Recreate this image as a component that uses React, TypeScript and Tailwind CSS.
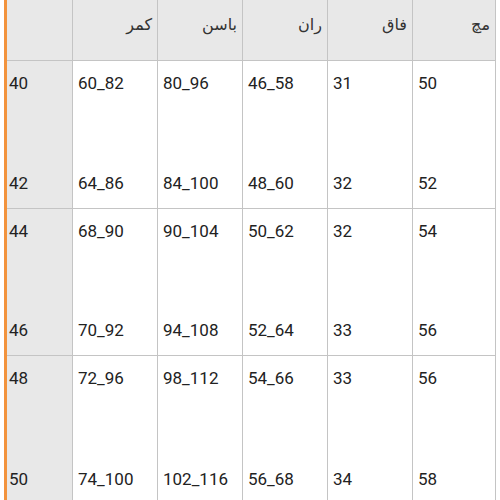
const headers = ['', 'کمر', 'باسن', 'ران', 'فاق', 'مچ'];

const rows: [string, string][][] = [
  [
    ['40', '42'],
    ['60_82', '64_86'],
    ['80_96', '84_100'],
    ['46_58', '48_60'],
    ['31', '32'],
    ['50', '52'],
  ],
  [
    ['44', '46'],
    ['68_90', '70_92'],
    ['90_104', '94_108'],
    ['50_62', '52_64'],
    ['32', '33'],
    ['54', '56'],
  ],
  [
    ['48', '50'],
    ['72_96', '74_100'],
    ['98_112', '102_116'],
    ['54_66', '56_68'],
    ['33', '34'],
    ['56', '58'],
  ],
];

const widths = ['w-[66px]', 'w-[85px]', 'w-[85px]', 'w-[85px]', 'w-[85px]', 'w-[83px]'];
const heights = ['h-[148px]', 'h-[147px]', 'h-[160px]'];

export default function App() {
  return (
    <div className="h-[500px] w-[500px] overflow-hidden bg-white pl-[4px] font-['Roboto','DejaVu_Sans',sans-serif]">
      <div className="h-full w-[492px] border-l-[3px] border-[#f2933d]">
        {/* header */}
        <div className="flex h-[61px] border-b border-[#c4c4c4] bg-[#e8e8e8]">
          {headers.map((h, i) => (
            <div
              key={i}
              dir="rtl"
              className={`${widths[i]} shrink-0 border-r border-[#c4c4c4] pr-[5px] pt-[14px] text-right text-[16px] leading-[22px] text-[#333]`}
            >
              {h}
            </div>
          ))}
        </div>

        {rows.map((row, r) => (
          <div key={r} className={`flex ${heights[r]} border-b border-[#c4c4c4]`}>
            {row.map((cell, i) => (
              <div
                key={i}
                className={`${widths[i]} shrink-0 border-r border-[#c4c4c4] flex flex-col justify-between pb-[13px] pt-[10px] text-[17px] leading-[24px] text-[#222] ${
                  i === 0 ? 'bg-[#e8e8e8] pl-[2px]' : 'bg-white pl-[5px]'
                } ${r === 2 ? '!pb-[24px]' : ''}`}
              >
                <div>{cell[0]}</div>
                <div>{cell[1]}</div>
              </div>
            ))}
          </div>
        ))}
      </div>
    </div>
  );
}
